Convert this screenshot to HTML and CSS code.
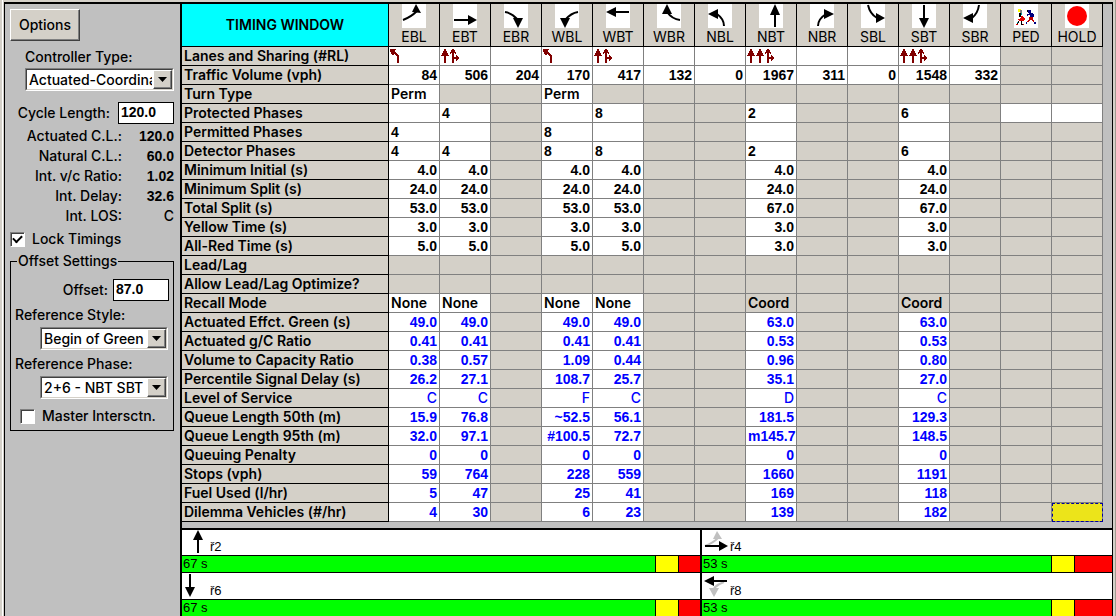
FILE: index.html
```html
<!DOCTYPE html>
<html lang="en">
<head>
<meta charset="utf-8">
<title>Timing Window</title>
<link rel="stylesheet" href="styles.css">
</head>
<body>
<svg class="defs" aria-hidden="true">
  <defs>
    <symbol id="lane-left" viewBox="0 0 9 15"><path d="M0 0h6v1h-1v2h1v1h1v1h1v1h1v8h-2v-7h-1v-1h-1v-1h-1v1h-2v-1h-1v-2h-1z"/></symbol>
    <symbol id="lane-up" viewBox="0 0 9 15"><path d="M3 0h2v2h1v2h1v2h1v1h-3v7h-2v-7h-3v-1h1v-2h1v-2h1z"/></symbol>
    <symbol id="lane-share" viewBox="0 0 9 15"><path d="M2 0h2v1h1v2h1v2h-1v-1h-1v4h2v-2h1v1h1v1h1v2h-1v1h-1v1h-1v-2h-2v4h-2v-10h-1v1h-1v-2h1v-2h1z"/></symbol>
  </defs>
</svg>
<div class="window">
  <aside class="sidebar">
    <button class="options" type="button">Options</button>
    <label class="type-label" for="ctype">Controller Type:</label>
    <div class="combo type-combo">
      <select id="ctype"><option>Actuated-Coordinated</option></select>
      <span class="drop"><svg viewBox="0 0 9 5"><path d="M0 0h9L4.500 5z"/></svg></span>
    </div>
    <div class="cycle"><label for="cycle">Cycle Length:</label><input class="box" id="cycle" type="text" value="120.0"></div>
    <dl class="stats">
      <dt>Actuated C.L.:</dt><dd>120.0</dd>
      <dt>Natural C.L.:</dt><dd>60.0</dd>
      <dt>Int. v/c Ratio:</dt><dd>1.02</dd>
      <dt>Int. Delay:</dt><dd>32.6</dd>
      <dt>Int. LOS:</dt><dd>C</dd>
    </dl>
    <label class="check"><input type="checkbox" checked>Lock Timings</label>
    <fieldset class="offset">
      <legend>Offset Settings</legend>
      <div class="offset-row"><label for="offset">Offset:</label><input class="box" id="offset" type="text" value="87.0"></div>
      <label class="ref" for="rstyle">Reference Style:</label>
      <div class="combo">
        <select id="rstyle"><option>Begin of Green</option></select>
        <span class="drop"><svg viewBox="0 0 9 5"><path d="M0 0h9L4.500 5z"/></svg></span>
      </div>
      <label class="ref" for="rphase">Reference Phase:</label>
      <div class="combo">
        <select id="rphase"><option>2+6 - NBT SBT</option></select>
        <span class="drop"><svg viewBox="0 0 9 5"><path d="M0 0h9L4.500 5z"/></svg></span>
      </div>
      <label class="check master"><input type="checkbox">Master Intersctn.</label>
    </fieldset>
  </aside>
  <main class="main">
    <table class="timing">
      <colgroup>
        <col class="name"><col class="on"><col class="on"><col><col class="on"><col class="on"><col><col><col class="on"><col><col><col class="on"><col><col><col>
      </colgroup>
      <thead>
        <tr>
          <th class="title">TIMING WINDOW</th>
          <th><svg viewBox="0 0 24 24"><path class="ln" d="M1 16Q9 13 15 7"/><path d="M14 0L19 9L10 8z"/></svg>EBL</th>
          <th><svg viewBox="0 0 24 24"><path class="ln" d="M1 16H16"/><path d="M24 16L15 11V21z"/></svg>EBT</th>
          <th><svg viewBox="0 0 24 24"><path class="ln" d="M1 8Q8 9 14 16"/><path d="M14 24L9 14H19z"/></svg>EBR</th>
          <th><svg viewBox="0 0 24 24"><path class="ln" d="M23 8Q16 9 10 16"/><path d="M10 24L5 14H15z"/></svg>WBL</th>
          <th><svg viewBox="0 0 24 24"><path class="ln" d="M23 8H8"/><path d="M0 8L10 3V13z"/></svg>WBT</th>
          <th><svg viewBox="0 0 24 24"><path class="ln" d="M23 16Q15 15 10 8"/><path d="M10 0L15 10H5z"/></svg>WBR</th>
          <th><svg viewBox="0 0 24 24"><path class="ln" d="M16 22Q16 15 9 10"/><path d="M0 10L10 5V15z"/></svg>NBL</th>
          <th><svg viewBox="0 0 24 24"><path class="ln" d="M16 23V8"/><path d="M16 0L21 11H11z"/></svg>NBT</th>
          <th><svg viewBox="0 0 24 24"><path class="ln" d="M8 22Q8 15 16 10"/><path d="M24 10L14 5V15z"/></svg>NBR</th>
          <th><svg viewBox="0 0 24 24"><path class="ln" d="M7 1Q9 10 16 14"/><path d="M24 14L15 9V19z"/></svg>SBL</th>
          <th><svg viewBox="0 0 24 24"><path class="ln" d="M12 1V16"/><path d="M12 24L7 14H17z"/></svg>SBT</th>
          <th><svg viewBox="0 0 24 24"><path class="ln" d="M16 1Q15 9 9 14"/><path d="M0 14L10 9V19z"/></svg>SBR</th>
          <th><svg viewBox="0 0 24 24"><path fill="#ff0" d="M4 5h3v1h-1v2h-2z"/><path fill="#808080" d="M6 6h2v3h-2z"/><path d="M5 9h2v4h-2zM4 17h1v2h-1v1h-1v-2h1zM7 17h1v3h2v1h-3zM13 6h2v2h-2z"/><path fill="#00a0a0" d="M7 9h1v2h-1zM3 18h1v1h-1z"/><path fill="#e00000" d="M7 12h2v1h1v1h1v2h-1v1h-5v-1h-1v-1h2v-1h1zM2 20h2v1h-2zM9 20h1v1h-1z"/><path fill="#000080" d="M14 6h3v3h2v1h1v3h-4v-2h-2v1h-1v-2h2v-1h-1zM12 18h1v2h-1zM20 18h2v2h-2z"/><path fill="#c00000" d="M15 13h4v3h1v2h-1v-1h-1v-1h-2v1h-1v1h-2v-1h1v-1h1z"/></svg>PED</th>
          <th><svg viewBox="0 0 24 24"><circle cx="12" cy="12" r="10" fill="#f00"/></svg>HOLD</th>
        </tr>
      </thead>
      <tbody>
        <tr class="all lanes"><th>Lanes and Sharing (#RL)</th><td><svg><use href="#lane-left"/></svg></td><td><svg><use href="#lane-up"/></svg><svg><use href="#lane-share"/></svg></td><td></td><td><svg><use href="#lane-left"/></svg></td><td><svg><use href="#lane-up"/></svg><svg><use href="#lane-share"/></svg></td><td></td><td></td><td><svg><use href="#lane-up"/></svg><svg><use href="#lane-up"/></svg><svg><use href="#lane-share"/></svg></td><td></td><td></td><td><svg><use href="#lane-up"/></svg><svg><use href="#lane-up"/></svg><svg><use href="#lane-share"/></svg></td><td></td><td class="off"></td><td class="off"></td></tr>
        <tr class="all"><th>Traffic Volume (vph)</th><td>84</td><td>506</td><td>204</td><td>170</td><td>417</td><td>132</td><td>0</td><td>1967</td><td>311</td><td>0</td><td>1548</td><td>332</td><td class="off"></td><td class="off"></td></tr>
        <tr class="text word"><th>Turn Type</th><td>Perm</td><td class="off"></td><td></td><td>Perm</td><td class="off"></td><td></td><td></td><td class="off"></td><td></td><td></td><td class="off"></td><td></td><td></td><td></td></tr>
        <tr class="text"><th>Protected Phases</th><td></td><td>4</td><td></td><td></td><td>8</td><td></td><td></td><td>2</td><td></td><td></td><td>6</td><td></td><td class="open"></td><td class="open"></td></tr>
        <tr class="text"><th>Permitted Phases</th><td>4</td><td></td><td></td><td>8</td><td></td><td></td><td></td><td></td><td></td><td></td><td></td><td></td><td></td><td></td></tr>
        <tr class="text"><th>Detector Phases</th><td>4</td><td>4</td><td></td><td>8</td><td>8</td><td></td><td></td><td>2</td><td></td><td></td><td>6</td><td></td><td></td><td></td></tr>
        <tr><th>Minimum Initial (s)</th><td>4.0</td><td>4.0</td><td></td><td>4.0</td><td>4.0</td><td></td><td></td><td>4.0</td><td></td><td></td><td>4.0</td><td></td><td></td><td></td></tr>
        <tr><th>Minimum Split (s)</th><td>24.0</td><td>24.0</td><td></td><td>24.0</td><td>24.0</td><td></td><td></td><td>24.0</td><td></td><td></td><td>24.0</td><td></td><td></td><td></td></tr>
        <tr><th>Total Split (s)</th><td>53.0</td><td>53.0</td><td></td><td>53.0</td><td>53.0</td><td></td><td></td><td>67.0</td><td></td><td></td><td>67.0</td><td></td><td></td><td></td></tr>
        <tr><th>Yellow Time (s)</th><td>3.0</td><td>3.0</td><td></td><td>3.0</td><td>3.0</td><td></td><td></td><td>3.0</td><td></td><td></td><td>3.0</td><td></td><td></td><td></td></tr>
        <tr><th>All-Red Time (s)</th><td>5.0</td><td>5.0</td><td></td><td>5.0</td><td>5.0</td><td></td><td></td><td>3.0</td><td></td><td></td><td>3.0</td><td></td><td></td><td></td></tr>
        <tr class="none"><th>Lead/Lag</th><td></td><td></td><td></td><td></td><td></td><td></td><td></td><td></td><td></td><td></td><td></td><td></td><td></td><td></td></tr>
        <tr class="none"><th>Allow Lead/Lag Optimize?</th><td></td><td></td><td></td><td></td><td></td><td></td><td></td><td></td><td></td><td></td><td></td><td></td><td></td><td></td></tr>
        <tr class="text word"><th>Recall Mode</th><td>None</td><td>None</td><td></td><td>None</td><td>None</td><td></td><td></td><td class="off">Coord</td><td></td><td></td><td class="off">Coord</td><td></td><td></td><td></td></tr>
      </tbody>
      <tbody class="results">
        <tr><th>Actuated Effct. Green (s)</th><td>49.0</td><td>49.0</td><td></td><td>49.0</td><td>49.0</td><td></td><td></td><td>63.0</td><td></td><td></td><td>63.0</td><td></td><td></td><td></td></tr>
        <tr><th>Actuated g/C Ratio</th><td>0.41</td><td>0.41</td><td></td><td>0.41</td><td>0.41</td><td></td><td></td><td>0.53</td><td></td><td></td><td>0.53</td><td></td><td></td><td></td></tr>
        <tr><th>Volume to Capacity Ratio</th><td>0.38</td><td>0.57</td><td></td><td>1.09</td><td>0.44</td><td></td><td></td><td>0.96</td><td></td><td></td><td>0.80</td><td></td><td></td><td></td></tr>
        <tr><th>Percentile Signal Delay (s)</th><td>26.2</td><td>27.1</td><td></td><td>108.7</td><td>25.7</td><td></td><td></td><td>35.1</td><td></td><td></td><td>27.0</td><td></td><td></td><td></td></tr>
        <tr class="grade"><th>Level of Service</th><td>C</td><td>C</td><td></td><td>F</td><td>C</td><td></td><td></td><td>D</td><td></td><td></td><td>C</td><td></td><td></td><td></td></tr>
        <tr><th>Queue Length 50th (m)</th><td>15.9</td><td>76.8</td><td></td><td>~52.5</td><td>56.1</td><td></td><td></td><td>181.5</td><td></td><td></td><td>129.3</td><td></td><td></td><td></td></tr>
        <tr><th>Queue Length 95th (m)</th><td>32.0</td><td>97.1</td><td></td><td>#100.5</td><td>72.7</td><td></td><td></td><td>m145.7</td><td></td><td></td><td>148.5</td><td></td><td></td><td></td></tr>
        <tr><th>Queuing Penalty</th><td>0</td><td>0</td><td></td><td>0</td><td>0</td><td></td><td></td><td>0</td><td></td><td></td><td>0</td><td></td><td></td><td></td></tr>
        <tr><th>Stops (vph)</th><td>59</td><td>764</td><td></td><td>228</td><td>559</td><td></td><td></td><td>1660</td><td></td><td></td><td>1191</td><td></td><td></td><td></td></tr>
        <tr><th>Fuel Used (l/hr)</th><td>5</td><td>47</td><td></td><td>25</td><td>41</td><td></td><td></td><td>169</td><td></td><td></td><td>118</td><td></td><td></td><td></td></tr>
        <tr><th>Dilemma Vehicles (#/hr)</th><td>4</td><td>30</td><td></td><td>6</td><td>23</td><td></td><td></td><td>139</td><td></td><td></td><td>182</td><td></td><td></td><td class="cursor"></td></tr>
      </tbody>
    </table>
    <section class="phases">
      <div class="phase">
        <div class="head"><svg viewBox="0 0 26 24"><path class="ln" d="M14 23V8"/><path d="M14 0L19 10H9z"/></svg>ř2</div>
        <div class="bar"><span class="go" style="flex-grow:473">67 s</span><span class="amber" style="flex-grow:24"></span><span class="stop" style="flex-grow:21"></span></div>
      </div>
      <div class="phase">
        <div class="head"><svg viewBox="0 0 26 24"><path class="soft" d="M1 16Q9 13 14 8"/><path class="softhead" d="M13 1L18 9H9z"/><path class="ln" d="M1 16H16"/><path d="M24 16L15 11V21z"/></svg>ř4</div>
        <div class="bar"><span class="go" style="flex-grow:349">53 s</span><span class="amber" style="flex-grow:24"></span><span class="stop" style="flex-grow:37"></span></div>
      </div>
      <div class="phase">
        <div class="head"><svg viewBox="0 0 26 24"><path class="ln" d="M6 1V16"/><path d="M6 24L1 14H11z"/></svg>ř6</div>
        <div class="bar"><span class="go" style="flex-grow:473">67 s</span><span class="amber" style="flex-grow:24"></span><span class="stop" style="flex-grow:21"></span></div>
      </div>
      <div class="phase">
        <div class="head"><svg viewBox="0 0 26 24"><path class="soft" d="M20 9Q14 11 10 15"/><path class="softhead" d="M10 24L5 15H15z"/><path class="ln" d="M23 8H8"/><path d="M0 8L10 3V13z"/></svg>ř8</div>
        <div class="bar"><span class="go" style="flex-grow:349">53 s</span><span class="amber" style="flex-grow:24"></span><span class="stop" style="flex-grow:37"></span></div>
      </div>
    </section>
  </main>
</div>
</body>
</html>
```
FILE: styles.css
```css
* { box-sizing: border-box; }

:root {
  --face: #d4d0c8;
  --panel: #c0c0c0;
  --label: Inter, "Open Sans", sans-serif;
  --digits: "Liberation Sans", Arial, sans-serif;
}

body {
  margin: 0;
  padding: 2px 3px 0 4px;
  min-height: 100vh;
  background: var(--face);
  color: #000;
  font: 500 14px/18px var(--label);
  display: flex;
  box-shadow: inset 2px 0 #d4d0c8, inset 3px 0 #fff, inset -1px 0 #a09c90;
}

.defs { position: absolute; width: 0; height: 0; }

.window {
  flex: 1;
  display: flex;
  min-width: 0;
  border: 1px solid #000;
  border-top-width: 2px;
  border-bottom: 0;
  background: var(--panel);
}

/* Sidebar */
.sidebar {
  flex: none;
  width: 175px;
  padding: 5px 6px 0 5px;
  display: flex;
  flex-direction: column;
  align-items: flex-start;
}

.options {
  width: 70px;
  height: 32px;
  padding: 0;
  border: 1px solid;
  border-color: #fff #404040 #404040 #fff;
  box-shadow: inset -1px -1px #808080;
  background: var(--face);
  color: #000;
  font: 500 14px/18px var(--label);
}

.type-label { margin: 7px 0 2px 15px; }

.combo {
  position: relative;
  height: 23px;
  border: 1px solid;
  border-color: #808080 #fff #fff #808080;
}
.type-combo { width: 149px; margin-left: 15px; align-self: flex-end; }

.combo select {
  appearance: none;
  display: block;
  width: 100%;
  height: 100%;
  margin: 0;
  padding: 0 20px 0 2px;
  border: 1px solid;
  border-color: #404040 var(--face) var(--face) #404040;
  border-radius: 0;
  background: #fff;
  color: #000;
  font: 500 14px/18px var(--label);
}

.drop {
  position: absolute;
  top: 1px;
  right: 1px;
  bottom: 1px;
  width: 19px;
  display: grid;
  place-items: center;
  background: var(--face);
  border: 1px solid;
  border-color: #fff #404040 #404040 #fff;
  box-shadow: inset -1px -1px #808080;
  pointer-events: none;
}
.drop svg { width: 9px; height: 5px; }

.box {
  width: 56px;
  height: 22px;
  padding: 0 0 2px 2px;
  border: 1px solid #000;
  border-radius: 0;
  background: #fff;
  color: #000;
  font: 700 14px/18px var(--digits);
}

.cycle {
  align-self: stretch;
  display: flex;
  justify-content: flex-end;
  align-items: center;
  gap: 8px;
  margin: 11px 0 2px;
}

.stats {
  align-self: stretch;
  margin: 0;
  display: grid;
  grid-template-columns: 112px 1fr;
  grid-auto-rows: 20px;
  line-height: 20px;
  text-align: right;
}
.stats dt { white-space: nowrap; }
.stats dd { margin: 0; font-family: var(--digits); font-weight: 700; }
.stats dd:last-child { font-family: var(--label); font-weight: 500; }

.check {
  display: flex;
  align-items: center;
  gap: 7px;
  margin-top: 4px;
  white-space: nowrap;
}
.check input {
  appearance: none;
  width: 15px;
  height: 15px;
  margin: 0;
  border: 1px solid;
  border-color: #808080 #fff #fff #808080;
  box-shadow: inset 1px 1px #404040;
  background: #fff;
  display: grid;
  place-items: center;
}
.check input:checked::before {
  content: "";
  width: 7px;
  height: 4px;
  border: solid #000;
  border-width: 0 0 2px 2px;
  transform: translateY(-1px) rotate(-45deg);
}

.offset {
  align-self: stretch;
  min-width: 0;
  margin: 4px 0 0;
  padding: 9px 4px 5px;
  border: 1px solid #000;
  display: flex;
  flex-direction: column;
}
.offset legend { margin-left: 2px; padding: 0 1px; }
.offset .combo { margin-left: 25px; margin-right: 1px; }
.offset-row {
  display: flex;
  justify-content: flex-end;
  align-items: center;
  gap: 5px;
}
.ref { margin: 5px 0 3px; }
.master { margin: 8px 0 0 5px; }

/* Timing table */
.main {
  flex: 1;
  min-width: 0;
  border-left: 2px solid #000;
}

.timing {
  width: calc(100% - 9px);
  border-collapse: separate;
  border-spacing: 0;
  table-layout: fixed;
  background: var(--face);
}
.timing col.name { width: 207px; }
.timing col.on { background: #fff; }
.timing th,
.timing td { padding: 0 2px; border: solid #000; border-width: 0 1px 1px 0; white-space: nowrap; }

.timing thead th {
  padding: 0;
  height: 43px;
  background: var(--face);
  font-weight: 400;
  vertical-align: top;
}
.timing thead svg {
  display: block;
  width: 24px;
  height: 24px;
  margin: 0 auto;
  background: #fff;
}
.timing thead .title {
  background: #0ff;
  font-weight: 600;
  vertical-align: middle;
}

.timing tbody th {
  background: var(--face);
  text-align: left;
  font-weight: 600;
}
.timing td {
  height: 19px;
  border-color: #808080;
  text-align: right;
  font-family: var(--digits);
  font-weight: 700;
}
.timing .all td,
.timing td.open { background: #fff; }
.timing td.off,
.timing .none td { background: var(--face); }
.timing .text td { text-align: left; }
.timing .word td { font-family: var(--label); font-weight: 600; }
.timing .grade td { font-family: var(--label); font-weight: 500; }
.timing .results td { color: #00f; }
.timing .lanes td { text-align: left; padding: 0 1px; line-height: 0; }
.lanes svg { width: 9px; height: 15px; fill: maroon; shape-rendering: crispEdges; }
.timing td.cursor {
  background: #ece41a;
  outline: 1px dashed #0000a0;
  outline-offset: -1px;
}

.ln { fill: none; stroke: #000; stroke-width: 2; }
.soft { fill: none; stroke: #c0c0c0; stroke-width: 2; }
.softhead { fill: #c0c0c0; }

/* Split diagram */
.phases {
  display: grid;
  grid-template-columns: 520fr 410fr;
  margin-top: 6px;
  border-top: 2px solid #000;
  background: #fff;
  font: 400 13px/16px var(--digits);
}
.phase:nth-child(odd) { border-right: 2px solid #000; }
.head {
  height: 25px;
  display: flex;
  align-items: flex-end;
  padding-left: 2px;
}
.phase:nth-child(n+3) .head { height: 26px; }
.head svg { width: 26px; height: 24px; align-self: flex-start; }
.bar {
  display: flex;
  height: 18px;
  border: solid #000;
  border-width: 1px 0;
}
.bar span { flex-basis: 0; }
.go { background: #0f0; text-indent: 1px; white-space: nowrap; }
.amber { background: #ff0; box-shadow: inset 1px 0 #000, inset -1px 0 #000; }
.stop { background: #f00; }
```
